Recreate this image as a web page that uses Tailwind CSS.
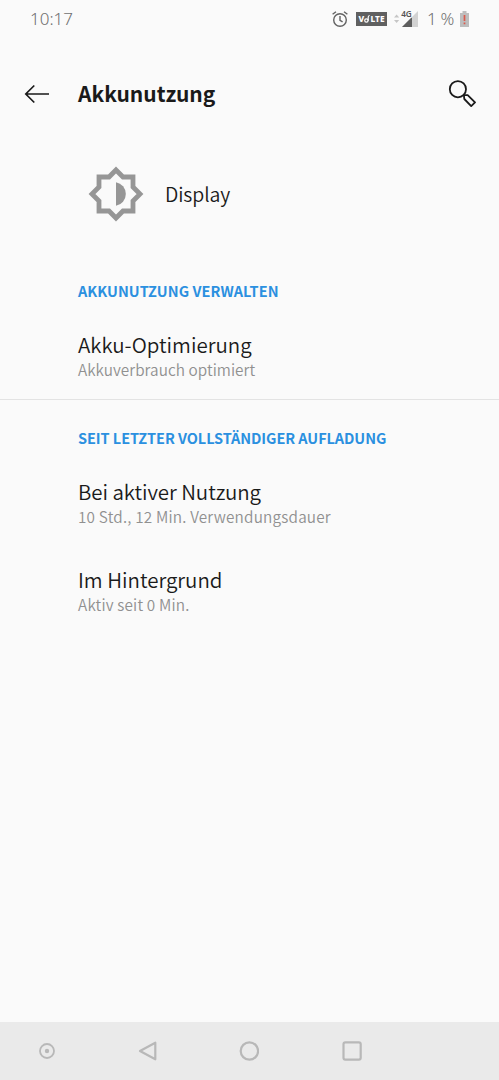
<!DOCTYPE html>
<html lang="de">
<head>
<meta charset="utf-8">
<title>Akkunutzung</title>
<script src="https://cdn.jsdelivr.net/npm/@tailwindcss/browser@4"></script>
</head>
<body class="bg-[#fafafa] font-['Noto_Sans_CJK_SC','Noto_Sans',sans-serif] text-[#1a1a1a]">
<div class="flex flex-col w-[499px] h-[1080px] overflow-hidden whitespace-nowrap">
  <header class="flex items-center h-[38px] pl-[30px] pr-[29px] font-['Noto_Sans',sans-serif] text-[#707070]">
    <span class="text-[17px] leading-[38px] font-light">10:17</span>
    <svg class="ml-auto w-[16px] h-[17px]" viewBox="0 0 16 17" fill="none" stroke="#626262" stroke-width="1.4"><circle cx="8" cy="9" r="6.3"/><path d="M8 5v4.3l2.6 1.6M.6 3.3 4 .7M15.4 3.3 12 .7"/></svg>
    <svg class="ml-[8px] w-[31px] h-[14px]" viewBox="0 0 31 14"><rect width="31" height="14" fill="#606060"/><g fill="#fff" font-family="Noto Sans" font-weight="800" font-size="8.5"><text x="2.5" y="10.3">V</text><text x="14.5" y="10.3" textLength="14" lengthAdjust="spacingAndGlyphs">LTE</text></g><g fill="none" stroke="#fff" stroke-width="1.2"><circle cx="10.4" cy="8.5" r="1.7"/><path d="M12.2 8.8V5.2Q12.2 3.7 13.7 3.5"/></g></svg>
    <svg class="ml-[7px] w-[25px] h-[18px] overflow-visible" viewBox="0 0 25 18"><path d="M0 7.5 2.6 4.5 5.2 7.5zM0 10h5.2L2.6 13z" fill="#c6c6c6"/><path d="M24 1V17H8z" fill="#d2d2d2"/><path d="M18 7V17H8z" fill="#5e5e5e"/><rect x="6" y="0" width="12" height="7.5" fill="#fafafa"/><text x="7.2" y="6.6" font-family="Noto Sans" font-weight="600" font-size="8" fill="#555" textLength="10.6" lengthAdjust="spacingAndGlyphs">4G</text></svg>
    <span class="ml-[8px] w-[28px] text-[17px] leading-[38px] font-light tracking-[-0.3px]">1 %</span>
    <svg class="ml-[5px] mr-[1px] w-[9px] h-[16px]" viewBox="0 0 9 16"><path d="M0 2h2.5V0h4v2H9v14H0z" fill="#bdbdbd"/><path d="M4.5 4v6M4.5 11.4v1.8" stroke="#dc5a4c" stroke-width="1.7"/></svg>
  </header>
  <nav class="flex items-center h-[112px] pl-[24px] pr-[23px]">
    <svg class="w-[26px] h-[20px]" viewBox="0 0 26 20" fill="none" stroke="#1a1a1a" stroke-width="1.7"><path d="M25 10H2M10.3 1.5 1.8 10l8.5 8.5"/></svg>
    <h1 class="ml-[28px] pb-[2px] text-[21px] leading-[30px] font-bold">Akkunutzung</h1>
    <svg class="ml-auto w-[28px] h-[28px]" viewBox="0 0 28 28" fill="none" stroke="#1a1a1a" stroke-width="1.8"><circle cx="9.9" cy="9.2" r="8.1"/><path d="M15.9 15.2h3.8L27 22.4 23.2 26.1 16.3 19z" stroke-linejoin="round"/></svg>
  </nav>
  <section class="flex items-center h-[89px] pl-[88px]">
    <svg class="mb-[1px] w-[56px] h-[56px]" viewBox="0 0 56 56"><path d="M28 4 35 11H45V21L52 28 45 35V45H35L28 52 21 45H11V35L4 28 11 21V11H21z" fill="none" stroke="#969696" stroke-width="4.8"/><path d="M28 16.2a12 12 0 0 1 0 23.6z" fill="#969696"/></svg>
    <span class="ml-[21px] pb-[1px] text-[19.5px] leading-[28px] font-[350] tracking-[-0.1px]">Display</span>
  </section>
  <main class="flex-1 pt-[42px]">
    <section class="h-[119px] border-b border-[#e3e3e3] pl-[78px]">
      <h2 class="text-[14.5px] leading-[20px] tracking-[0.05px] font-bold text-[#2b90e0]">AKKUNUTZUNG VERWALTEN</h2>
      <p class="mt-[28px] text-[20.5px] leading-[30px] font-[350]">Akku-Optimierung</p>
      <p class="text-[15.3px] leading-[20px] font-[350] tracking-[0.06px] text-[#909090]">Akkuverbrauch optimiert</p>
    </section>
    <section class="pt-[28px] pl-[78px]">
      <h2 class="text-[14.5px] leading-[20px] tracking-[-0.06px] font-bold text-[#2b90e0]">SEIT LETZTER VOLLSTÄNDIGER AUFLADUNG</h2>
      <p class="mt-[28px] text-[20.5px] leading-[30px] font-[350] tracking-[-0.06px]">Bei aktiver Nutzung</p>
      <p class="text-[15.3px] leading-[20px] font-[350] tracking-[0.2px] text-[#909090]">10 Std., 12 Min. Verwendungsdauer</p>
      <p class="mt-[38px] text-[20.5px] leading-[30px] font-[350] tracking-[-0.02px]">Im Hintergrund</p>
      <p class="text-[15.3px] leading-[20px] font-[350] tracking-[0.18px] text-[#909090]">Aktiv seit 0 Min.</p>
    </section>
  </main>
  <footer class="flex items-center h-[58px] bg-[#eaeaea] pl-[39px]">
    <svg class="w-[16px] h-[16px]" viewBox="0 0 16 16"><circle cx="8" cy="8" r="7" fill="none" stroke="#b8b8b8" stroke-width="1.8"/><circle cx="8" cy="8" r="2.2" fill="#b8b8b8"/></svg>
    <svg class="ml-[83px] w-[20px] h-[20px]" viewBox="0 0 20 20" fill="none" stroke="#b8b8b8" stroke-width="2.2" stroke-linejoin="round"><path d="M17.3 1.7V18.3L2 10z"/></svg>
    <svg class="ml-[81px] w-[20px] h-[20px]" viewBox="0 0 20 20" fill="none" stroke="#b8b8b8" stroke-width="2.2"><circle cx="10.4" cy="10" r="8.7"/></svg>
    <svg class="ml-[83px] w-[20px] h-[20px]" viewBox="0 0 20 20" fill="none" stroke="#b8b8b8" stroke-width="2.2"><rect x="1.5" y="1.4" width="17.2" height="17.2" rx="1.8"/></svg>
  </footer>
</div>
</body>
</html>
